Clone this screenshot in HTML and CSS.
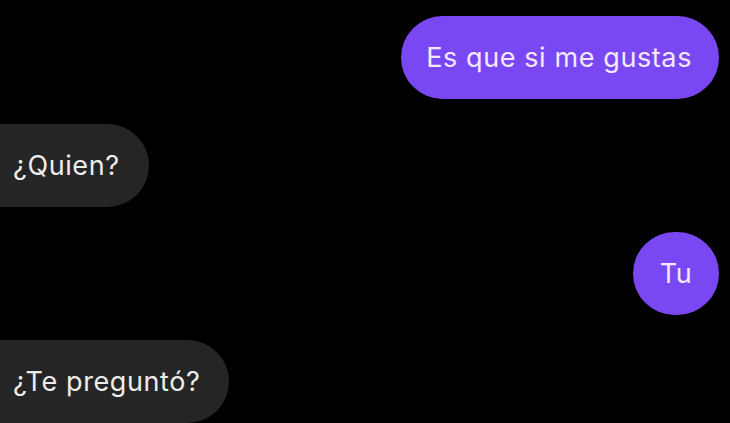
FILE: index.html
```html
<!DOCTYPE html>
<html lang="es">
<head>
<meta charset="utf-8">
<link rel="stylesheet" href="styles.css">
</head>
<body>
<div class="chat">
  <div class="msg msg-out">Es que si me gustas</div>
  <div class="msg msg-in">¿Quien?</div>
  <div class="msg msg-out msg-round">Tu</div>
  <div class="msg msg-in">¿Te preguntó?</div>
</div>
</body>
</html>
```
FILE: styles.css
```css
html, body {
  margin: 0;
  padding: 0;
  background: #000;
  width: 730px;
  height: 423px;
  overflow: hidden;
}
.chat {
  display: flex;
  flex-direction: column;
  gap: 25px;
  padding: 16px 11px 0 0;
  font-family: Inter, "Noto Sans", sans-serif;
  font-size: 27px;
  letter-spacing: 0.6px;
}
.msg {
  height: 83px;
  box-sizing: border-box;
  display: flex;
  align-items: center;
  border-radius: 42px;
  white-space: nowrap;
}
.msg-out {
  align-self: flex-end;
  background: #7a48f2;
  color: #f3e8ff;
  padding: 0 27px 0 25px;
}
.msg-round {
  min-width: 86px;
  justify-content: center;
  padding: 0;
}
.msg-in {
  align-self: flex-start;
  background: #252525;
  color: #ececec;
  margin-left: -40px;
  padding: 0 29px 0 53px;
}
```
